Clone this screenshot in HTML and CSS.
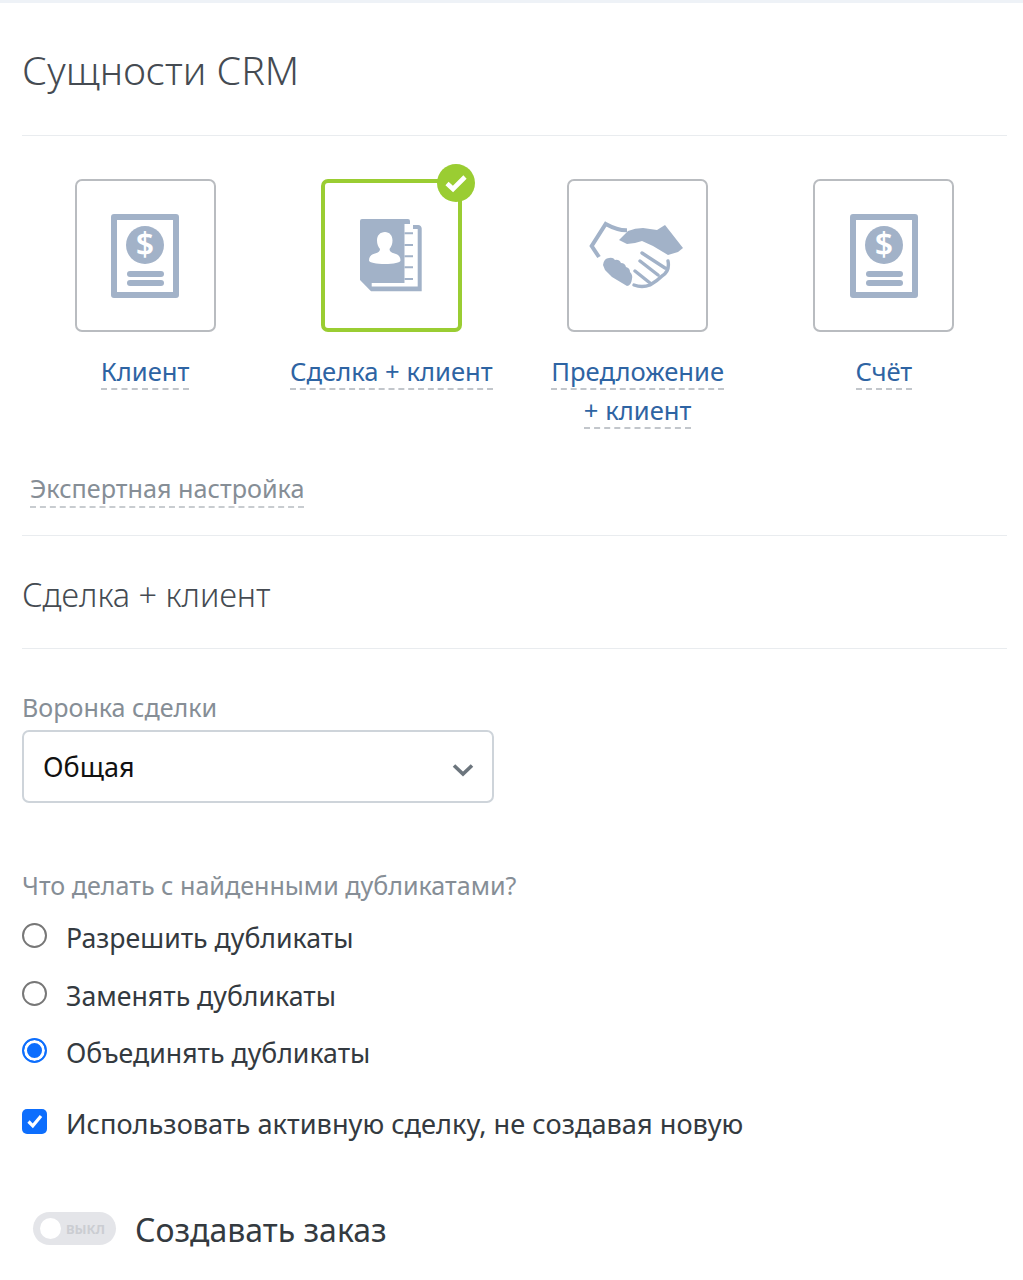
FILE: index.html
```html
<!DOCTYPE html>
<html lang="ru">
<head>
<meta charset="utf-8">
<title>Сущности CRM</title>
<link rel="stylesheet" href="styles.css">
</head>
<body>
<div class="topline"></div>
<main class="page">
  <h1 class="title">Сущности CRM</h1>
  <div class="tiles">
    <div class="tile">
      <div class="box">
        <svg class="ico" width="68" height="84" viewBox="0 0 68 84"><use href="#doc"/></svg>
      </div>
      <div class="caption"><span class="dash">Клиент</span></div>
    </div>
    <div class="tile">
      <div class="box box-on">
        <svg class="ico" width="62" height="73" viewBox="0 0 62 73">
          <path fill="#a2b2c8" d="M2 0H48a2 2 0 0 1 2 2V6H58a3.500 3.500 0 0 1 3.700 3.500V72.300H11L0 61V2A2 2 0 0 1 2 0Z"/>
          <path fill="#fff" d="M44.500 5H53V10H57.700V67.500H11.700V64H44.500Z"/>
          <path fill="#a2b2c8" d="M44.500 13.300H53V15.300H44.500ZM44.500 25H53V27H44.500ZM44.500 36.300H53V38.300H44.500ZM44.500 47.300H53V49.300H44.500ZM44.500 59H53V61H44.500Z"/>
          <path fill="#fff" d="M25 13c4.500 0 7.500 3.500 7.500 8.500 0 3.500-1.200 6.500-3 8.500 0 2.500 1.500 3.500 5 4.500 4 1 6 3 6 7 0 2-7 3.500-15.500 3.500S9 43.500 9 41.500c0-4 2-6 6-7 3.500-1 5-2 5-4.500-1.800-2-3-5-3-8.500 0-5 3-8.500 8-8.500Z"/>
        </svg>
        <span class="badge">
          <svg width="24" height="20" viewBox="0 0 24 20"><path d="M3 10.500l6 5.500L21 4" fill="none" stroke="#fff" stroke-width="4.600"/></svg>
        </span>
      </div>
      <div class="caption"><span class="dash">Сделка + клиент</span></div>
    </div>
    <div class="tile">
      <div class="box">
        <svg class="ico" width="105" height="75" viewBox="0 0 105 75">
          <path fill="none" stroke="#a2b2c8" stroke-width="4" d="M14 39L6.700 28 20.700 6C28 10 34 12.500 42 12.300"/>
          <path fill="#a2b2c8" d="M34 22L43 13Q50 10 58 10L72 12 80 7 98 30 93 34 83 37 68 28 57 23 50 25 42 26Z"/>
          <path fill="#a2b2c8" d="M18 47Q19 40 24 40Q28 39 30 42Q34 41 36 45Q40 45 41 49Q45 50 45 54Q48 57 47 61Q46 68 42 68L27 59 20 52Z"/>
          <path fill="none" stroke="#a2b2c8" stroke-width="3.400" stroke-linecap="round" d="M57 35L80 50M55 43L73 57M50 53L65 65M83 43Q85 53 77 58Q72 63 65 67Q57 70 49 67"/>
        </svg>
      </div>
      <div class="caption"><span class="dash">Предложение</span><br><span class="dash">+ клиент</span></div>
    </div>
    <div class="tile">
      <div class="box">
        <svg class="ico" width="68" height="84" viewBox="0 0 68 84"><use href="#doc"/></svg>
      </div>
      <div class="caption"><span class="dash">Счёт</span></div>
    </div>
  </div>

  <div class="expert"><span class="dash-grey">Экспертная настройка</span></div>

  <h2 class="subtitle">Сделка + клиент</h2>

  <div class="field-label">Воронка сделки</div>
  <div class="select">
    <span>Общая</span>
    <svg class="chev" width="22" height="14" viewBox="0 0 22 14"><path d="M2 2.500l9 8.500 9-8.500" fill="none" stroke="#6c757d" stroke-width="3.600"/></svg>
  </div>

  <div class="field-label field-label-q">Что делать с найденными дубликатами?</div>
  <div class="options">
    <div class="opt"><span class="radio"></span>Разрешить дубликаты</div>
    <div class="opt"><span class="radio"></span>Заменять дубликаты</div>
    <div class="opt"><span class="radio radio-on"></span>Объединять дубликаты</div>
  </div>
  <div class="opt opt-check">
    <span class="check">
      <svg width="20" height="20" viewBox="0 0 20 20"><path d="M3.500 10.500l4.300 4.300 8.200-9.800" fill="none" stroke="#fff" stroke-width="3.200"/></svg>
    </span>
    Использовать активную сделку, не создавая новую
  </div>

  <div class="toggle-row">
    <span class="toggle"><span class="knob"></span><span class="toggle-text">ВЫКЛ</span></span>
    <span class="toggle-label">Создавать заказ</span>
  </div>
</main>
<svg class="defs" width="0" height="0">
  <defs>
    <g id="doc">
      <path fill="#a2b2c8" fill-rule="evenodd" d="M3 0H65A3 3 0 0 1 68 3V81A3 3 0 0 1 65 84H3A3 3 0 0 1 0 81V3A3 3 0 0 1 3 0ZM6 6V78H62V6Z"/>
      <circle cx="34" cy="31" r="19" fill="#a2b2c8"/>
      <rect x="16" y="57" width="37" height="6" rx="3" fill="#a2b2c8"/>
      <rect x="16" y="66" width="37" height="6" rx="3" fill="#a2b2c8"/>
      <text x="34" y="42" text-anchor="middle" class="dollar">$</text>
    </g>
  </defs>
</svg>
</body>
</html>
```
FILE: styles.css
```css
* { box-sizing: border-box; }
html, body { margin: 0; padding: 0; background: #fff; }
body {
  font-family: "Noto Sans", "Open Sans", "Liberation Sans", sans-serif;
  color: #343a40;
  overflow: hidden;
  height: 1280px;
}
.topline { height: 3px; background: #eef2f7; }
.page { padding: 0 16px 0 22px; }
.title {
  margin: 0;
  height: 133px;
  padding-top: 38px;
  font-size: 39.400px;
  line-height: 58px;
  font-weight: 300;
  color: #454b52;
  border-bottom: 1px solid #e9ecef;
}
.tiles {
  display: grid;
  grid-template-columns: repeat(4, 1fr);
  padding-top: 43px;
  height: 324px;
}
.tile { display: flex; flex-direction: column; align-items: center; }
.box {
  position: relative;
  width: 141px;
  height: 153px;
  flex: none;
  border: 2px solid #b9bcc0;
  border-radius: 7px;
  display: flex;
  align-items: center;
  justify-content: center;
}
.box-on { border: 4px solid #9acd32; }
.badge {
  position: absolute;
  top: -19px;
  right: -17px;
  width: 38px;
  height: 38px;
  border-radius: 50%;
  background: #9acd32;
  display: flex;
  align-items: center;
  justify-content: center;
}
.dollar { font-size: 32px; font-weight: 600; fill: #fff; font-family: "Noto Sans", sans-serif; }
.caption {
  margin-top: 20px;
  text-align: center;
  font-size: 25.600px;
  line-height: 39px;
  color: #2e64a3;
}
.dash {
  display: inline-block;
  line-height: 32px;
  border-bottom: 2px dashed #c2c6cb;
}
.dash-grey { border-bottom: 2px dashed #c8ccd0; padding-bottom: 1px; }
.expert {
  padding-left: 8px;
  height: 76px;
  padding-top: 8px;
  font-size: 25.200px;
  line-height: 40px;
  color: #868e96;
  border-bottom: 1px solid #e9ecef;
}
.subtitle {
  margin: 0;
  height: 113px;
  padding-top: 34px;
  font-size: 32.400px;
  line-height: 48px;
  font-weight: 300;
  color: #454b52;
  border-bottom: 1px solid #e9ecef;
}
.field-label {
  margin-top: 39px;
  font-size: 25.100px;
  line-height: 38px;
  color: #868e96;
}
.select {
  margin-top: 4px;
  width: 472px;
  height: 73px;
  border: 2px solid #ced4da;
  border-radius: 7px;
  padding: 0 18px 0 19px;
  display: flex;
  align-items: center;
  justify-content: space-between;
  font-size: 27px;
  color: #111;
}
.chev { margin-top: 6px; }
.field-label-q { margin-top: 63px; }
.options { margin-top: 5px; display: flex; flex-direction: column; }
.opt {
  display: flex;
  align-items: center;
  gap: 19px;
  height: 57.500px;
  font-size: 26.700px;
  color: #343a40;
}
.radio {
  flex: none;
  width: 25px;
  height: 25px;
  border: 2px solid #777;
  border-radius: 50%;
  margin-top: -4px;
  background: #fff;
}
.radio-on {
  border: 2px solid #0d6efd;
  background: #0d6efd;
  box-shadow: inset 0 0 0 3px #fff;
}
.opt-check { margin-top: 13px; font-size: 27.200px; }
.check {
  flex: none;
  width: 25px;
  height: 25px;
  border-radius: 5px;
  background: #0d6efd;
  display: flex;
  align-items: center;
  justify-content: center;
  margin-top: -4px;
}
.toggle-row {
  margin-top: 53px;
  padding-left: 11px;
  display: flex;
  align-items: center;
  gap: 19px;
}
.toggle {
  width: 83px;
  height: 33px;
  margin-top: 1px;
  border-radius: 17px;
  background: #e4e5e9;
  display: flex;
  align-items: center;
  padding-left: 7px;
  gap: 5px;
}
.knob { width: 21px; height: 21px; border-radius: 50%; background: #fff; }
.toggle-text { font-size: 13px; font-weight: 700; color: #cbcdd2; }
.toggle-label { font-size: 32px; margin-top: 3px; color: #343a40; }
.defs { position: absolute; }
```
